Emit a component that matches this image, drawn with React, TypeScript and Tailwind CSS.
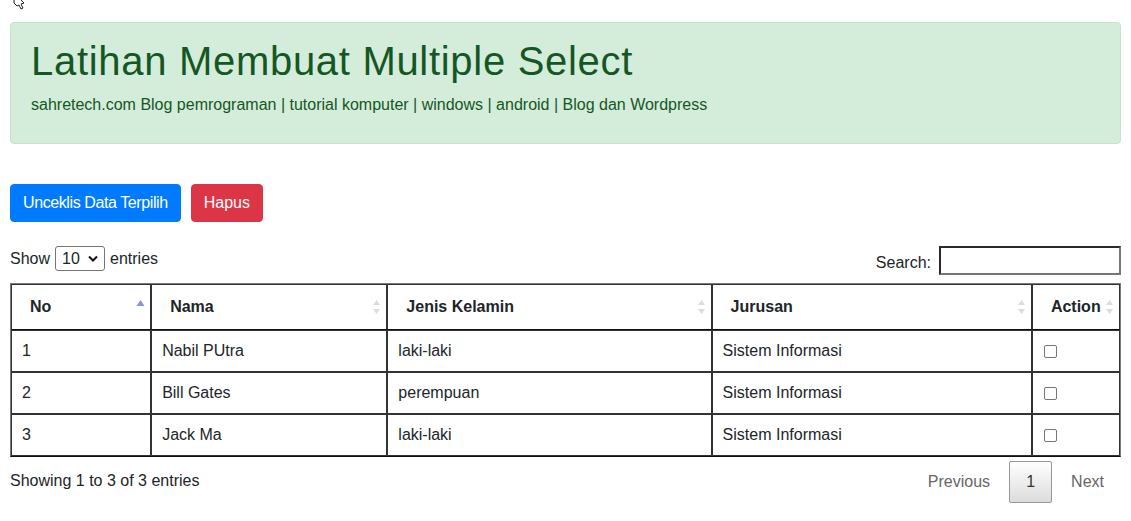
import React from "react";

const SortBoth = () => (
  <svg width="9" height="16" viewBox="0 0 9 16" className="absolute right-[5px] top-1/2 -translate-y-1/2">
    <polygon points="4.5,1 8,6 1,6" fill="#dcdcdc" />
    <polygon points="1,10 8,10 4.5,15" fill="#dcdcdc" />
  </svg>
);

const SortAsc = () => (
  <svg width="9" height="16" viewBox="0 0 9 16" className="absolute right-[5px] top-1/2 -translate-y-1/2">
    <polygon points="4.5,1 8.5,7 0.5,7" fill="#8a93d9" />
  </svg>
);

const Check = () => (
  <span className="inline-block w-[13px] h-[13px] border border-[#767676] rounded-[2px] bg-white align-middle ml-[1px]" />
);

const rows = [
  { no: "1", nama: "Nabil PUtra", jk: "laki-laki", jur: "Sistem Informasi" },
  { no: "2", nama: "Bill Gates", jk: "perempuan", jur: "Sistem Informasi" },
  { no: "3", nama: "Jack Ma", jk: "laki-laki", jur: "Sistem Informasi" },
];

export default function App() {
  const th = "relative border border-[#333] border-b-[#111] text-left font-bold py-[10px] pl-[18px] pr-[18px] leading-6";
  const td = "border border-[#333] py-2 px-[10px] leading-6";
  return (
    <div className="relative min-h-screen bg-white px-[10px] pt-[22px] font-['Liberation_Sans',Arial,sans-serif] text-[16px] text-[#212529]">
      <svg width="14" height="10" viewBox="0 0 14 10" className="absolute left-[13px] top-0">
        <path d="M1 0 L1 3 L4 6 L6 5 L8 9 L10 8 L8 4 L11 3 L8 0" fill="#fff" stroke="#222" strokeWidth="1" />
      </svg>

      <div className="border border-[#c3e6cb] bg-[#d4edda] text-[#155724] rounded-[4px] px-5 pt-3 pb-[26px]">
        <h1 className="text-[40px] leading-[1.2] font-medium mb-2 mt-[2px] tracking-[0.7px]">Latihan Membuat Multiple Select</h1>
        <p className="leading-6">sahretech.com Blog pemrograman | tutorial komputer | windows | android | Blog dan Wordpress</p>
      </div>

      <div className="mt-[40px] flex gap-[10px]">
        <button className="bg-[#007bff] border border-[#007bff] text-white rounded-[4px] px-3 py-[6px] leading-6 tracking-[-0.4px]">
          Unceklis Data Terpilih
        </button>
        <button className="bg-[#dc3545] border border-[#dc3545] text-white rounded-[4px] px-3 py-[6px] leading-6">
          Hapus
        </button>
      </div>

      <div className="mt-[24px] flex justify-between items-start">
        <div className="flex items-center h-[25px]">
          <span>Show</span>
          <span className="ml-[5px] mr-[5px] inline-flex items-center justify-between w-[50px] h-[25px] border border-[#767676] rounded-[3px] bg-white pl-[6px] pr-[6px]">
            <span>10</span>
            <svg width="10" height="7" viewBox="0 0 10 7">
              <path d="M1 1.5 L5 5.5 L9 1.5" fill="none" stroke="#111" strokeWidth="2" />
            </svg>
          </span>
          <span>entries</span>
        </div>
        <div className="flex items-center h-[29px] pt-[4px]">
          <span>Search:</span>
          <span className="ml-2 block w-[182px] h-[29px] -mt-[4px] border-2 border-[#767676] border-t-[#2a2a2a] border-l-[#2a2a2a] bg-white" />
        </div>
      </div>

      <table className="mt-[8px] w-full table-fixed border-separate border-spacing-0 border border-[#7a7a7a] border-b-[#111]">
        <colgroup>
          <col className="w-[140px]" />
          <col className="w-[236px]" />
          <col className="w-[324px]" />
          <col className="w-[320px]" />
          <col className="w-[88px]" />
        </colgroup>
        <thead>
          <tr>
            <th className={th}>No<SortAsc /></th>
            <th className={th}>Nama<SortBoth /></th>
            <th className={th}>Jenis Kelamin<SortBoth /></th>
            <th className={th}>Jurusan<SortBoth /></th>
            <th className={th}>Action<SortBoth /></th>
          </tr>
        </thead>
        <tbody>
          {rows.map((r) => (
            <tr key={r.no}>
              <td className={td}>{r.no}</td>
              <td className={td}>{r.nama}</td>
              <td className={td}>{r.jk}</td>
              <td className={td}>{r.jur}</td>
              <td className={td}><Check /></td>
            </tr>
          ))}
        </tbody>
      </table>

      <div className="flex justify-between items-start">
        <div className="pt-[12px] leading-6">Showing 1 to 3 of 3 entries</div>
        <div className="pt-[4px] flex">
          <span className="px-4 py-2 leading-6 border border-transparent text-[#666]">Previous</span>
          <span className="ml-[2px] min-w-[43px] text-center px-4 py-2 leading-6 border border-[#979797] rounded-[2px] bg-gradient-to-b from-white to-[#dcdcdc] text-[#333]">1</span>
          <span className="ml-[2px] px-4 py-2 leading-6 border border-transparent text-[#666]">Next</span>
        </div>
      </div>
    </div>
  );
}
